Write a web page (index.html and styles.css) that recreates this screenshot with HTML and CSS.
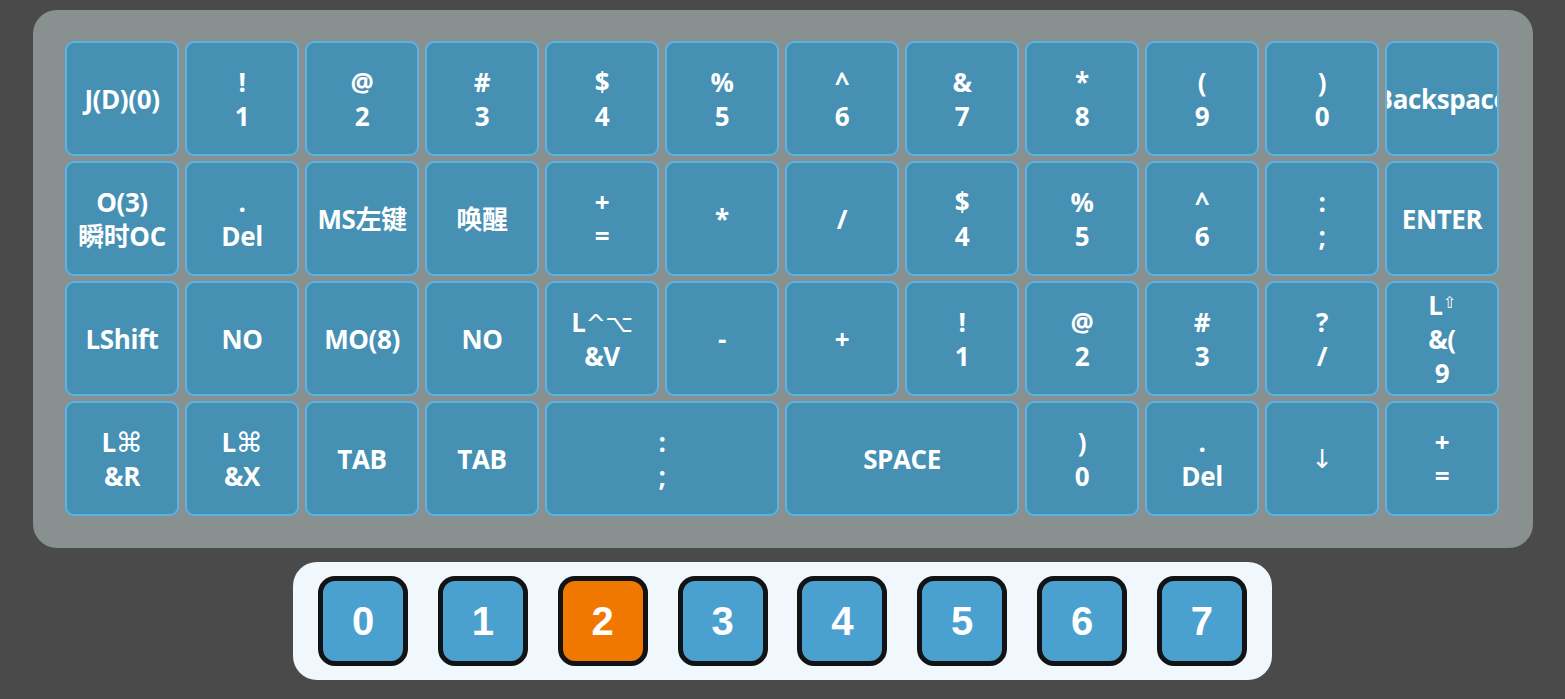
FILE: index.html
```html
<!DOCTYPE html>
<html>
<head>
<meta charset="utf-8">
<link rel="stylesheet" href="styles.css">
</head>
<body>
<div class="page">
  <div class="board">
    <div class="key"><span>J(D)(0)</span></div>
    <div class="key"><span>!</span><span>1</span></div>
    <div class="key"><span>@</span><span>2</span></div>
    <div class="key"><span>#</span><span>3</span></div>
    <div class="key"><span>$</span><span>4</span></div>
    <div class="key"><span>%</span><span>5</span></div>
    <div class="key"><span>^</span><span>6</span></div>
    <div class="key"><span>&amp;</span><span>7</span></div>
    <div class="key"><span>*</span><span>8</span></div>
    <div class="key"><span>(</span><span>9</span></div>
    <div class="key"><span>)</span><span>0</span></div>
    <div class="key"><span>Backspace</span></div>

    <div class="key"><span>O(3)</span><span>瞬时OC</span></div>
    <div class="key"><span>.</span><span>Del</span></div>
    <div class="key"><span>MS左键</span></div>
    <div class="key"><span>唤醒</span></div>
    <div class="key"><span>+</span><span>=</span></div>
    <div class="key"><span>*</span></div>
    <div class="key"><span>/</span></div>
    <div class="key"><span>$</span><span>4</span></div>
    <div class="key"><span>%</span><span>5</span></div>
    <div class="key"><span>^</span><span>6</span></div>
    <div class="key"><span>:</span><span>;</span></div>
    <div class="key"><span>ENTER</span></div>

    <div class="key"><span>LShift</span></div>
    <div class="key"><span>NO</span></div>
    <div class="key"><span>MO(8)</span></div>
    <div class="key"><span>NO</span></div>
    <div class="key"><span>L<span class="sym">^⌥</span></span><span>&amp;V</span></div>
    <div class="key"><span>-</span></div>
    <div class="key"><span>+</span></div>
    <div class="key"><span>!</span><span>1</span></div>
    <div class="key"><span>@</span><span>2</span></div>
    <div class="key"><span>#</span><span>3</span></div>
    <div class="key"><span>?</span><span>/</span></div>
    <div class="key"><span>L<span class="sym small">⇧</span></span><span>&amp;(</span><span>9</span></div>

    <div class="key"><span>L<span class="sym cmd">⌘</span></span><span>&amp;R</span></div>
    <div class="key"><span>L<span class="sym cmd">⌘</span></span><span>&amp;X</span></div>
    <div class="key"><span>TAB</span></div>
    <div class="key"><span>TAB</span></div>
    <div class="key wide"><span>:</span><span>;</span></div>
    <div class="key wide"><span>SPACE</span></div>
    <div class="key"><span>)</span><span>0</span></div>
    <div class="key"><span>.</span><span>Del</span></div>
    <div class="key"><span class="arrow">↓</span></div>
    <div class="key"><span>+</span><span>=</span></div>
  </div>

  <div class="layers">
    <div class="layer">0</div>
    <div class="layer">1</div>
    <div class="layer active">2</div>
    <div class="layer">3</div>
    <div class="layer">4</div>
    <div class="layer">5</div>
    <div class="layer">6</div>
    <div class="layer">7</div>
  </div>
</div>
</body>
</html>
```
FILE: styles.css
```css
html, body {
  margin: 0;
  padding: 0;
  background: #4a4a4a;
}
.page {
  width: 1565px;
  height: 699px;
  padding-top: 10px;
  box-sizing: border-box;
  display: flex;
  flex-direction: column;
  align-items: flex-start;
}
.board {
  margin-left: 33px;
  padding: 31px 34px 32px 32px;
  background: #899190;
  border-radius: 24px;
  display: grid;
  grid-template-columns: repeat(12, 114px);
  grid-auto-rows: 115px;
  gap: 5px 6px;
}
.key {
  box-sizing: border-box;
  background: #4690b3;
  border: 2px solid #5ab3e3;
  border-radius: 9px;
  display: flex;
  flex-direction: column;
  align-items: center;
  justify-content: center;
  overflow: hidden;
  color: #ffffff;
  font-family: "Open Sans", "Noto Sans CJK SC", sans-serif;
  font-weight: 700;
  font-size: 26px;
  line-height: 34px;
  white-space: nowrap;
  letter-spacing: -0.4px;
}
.key > span {
  display: block;
  text-align: center;
}
.key.wide {
  grid-column: span 2;
}
.sym {
  font-family: "DejaVu Sans", sans-serif;
  font-weight: 400;
  font-size: 24px;
  line-height: 1;
}
.sym.cmd {
  font-size: 27px;
}
.sym.small {
  font-size: 16px;
  vertical-align: 7px;
}
.arrow {
  font-family: "DejaVu Sans", sans-serif;
  font-weight: 400;
  font-size: 26px;
}
.layers {
  margin-top: 14px;
  margin-left: 293px;
  width: 979px;
  height: 118px;
  box-sizing: border-box;
  background: #f0f7fd;
  border-radius: 24px;
  padding: 0 25px;
  display: flex;
  align-items: center;
  justify-content: space-between;
}
.layer {
  width: 90px;
  height: 90px;
  box-sizing: border-box;
  background: #4aa0cf;
  border: 5px solid #111315;
  border-radius: 17px;
  display: flex;
  align-items: center;
  justify-content: center;
  color: #ffffff;
  font-family: "Liberation Sans", Arial, sans-serif;
  font-weight: 700;
  font-size: 40px;
}
.layer.active {
  background: #f07800;
}
```
